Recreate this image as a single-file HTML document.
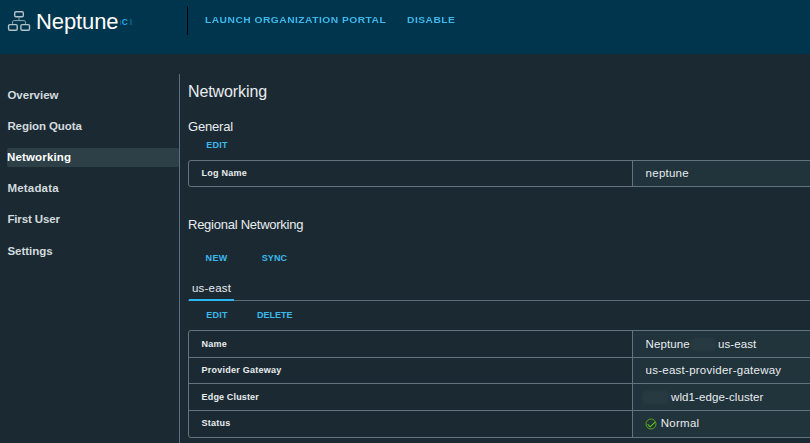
<!DOCTYPE html>
<html><head><meta charset="utf-8">
<style>
*{box-sizing:border-box;margin:0;padding:0}
html,body{width:810px;height:443px;overflow:hidden;background:#1b2a32;font-family:"Liberation Sans",sans-serif;color:#e9ecef}
.abs{position:absolute;white-space:nowrap}
#hdr{position:absolute;left:0;top:0;width:810px;height:54px;background:#00364d}
#title{left:36px;top:8px;font-size:22px;line-height:28px;color:#fff;letter-spacing:-0.1px}
#vsep{position:absolute;left:187px;top:6px;width:1px;height:29px;background:#000}
.hbtn{font-size:9.3px;font-weight:bold;color:#3cb8ee;letter-spacing:0.45px;top:14px;line-height:12px;transform:scaleX(1.1);transform-origin:0 0}
.nav{left:7px;font-size:11.5px;font-weight:bold;color:#d3dade;line-height:14px}
#navsel{position:absolute;left:7px;top:148px;width:172px;height:19px;background:#2d4048;border-radius:2px}
#vline{position:absolute;left:179px;top:74px;width:1px;height:369px;background:#5c7079}
h1,h2{font-weight:normal}
.h1{left:188px;font-size:16px;color:#e9ecef;letter-spacing:-0.1px}
.h2{left:188px;font-size:13px;color:#e9ecef;letter-spacing:-0.2px}
.btn{font-size:9px;font-weight:bold;color:#3cb8ee;letter-spacing:0.4px;line-height:12px}
.tbl{position:absolute;left:188px;width:640px;border:1px solid #62757e;border-radius:3px;}
.row{position:relative;height:26.67px;border-top:1px solid #62757e}
.row:first-child{border-top:none;height:25.67px}
.t1 .row:first-child{height:25px}
.lab{position:absolute;left:12.6px;top:0;line-height:25px;font-size:9px;font-weight:bold;color:#e9ecef;letter-spacing:0.25px}
.d1 .lab,.d1 .val{line-height:27px}
.val{position:absolute;left:443px;top:0;right:0;bottom:0;background:#21333b;border-left:1px solid #62757e;padding-left:12.6px;line-height:25px;font-size:11.5px;color:#e9ecef;letter-spacing:0.25px}
.sm{position:absolute;background:rgba(255,255,255,.035);filter:blur(1.5px);border-radius:4px}
</style></head><body>
<div id="hdr"></div>
<svg class="abs" style="left:0;top:0" width="40" height="40" viewBox="0 0 40 40" fill="none" stroke="#b3c1c9" stroke-width="1.4">
<rect x="14.7" y="11.7" width="8.6" height="5" rx="1.2"/><rect x="8.6" y="24.6" width="8.6" height="5.7" rx="1.2"/><rect x="20.9" y="24.6" width="8.6" height="5.7" rx="1.2"/><path stroke-width="1" stroke="#8fa3ad" d="M19 17.4v3.2M12.6 24v-2.2q0-1.2 1.2-1.2h10.4q1.2 0 1.2 1.2V24"/></svg>
<div class="abs" id="title">Neptune</div>
<div class="abs" style="left:119.6px;top:19.6px;width:1px;height:5px;background:#1d8fc4;opacity:.45"></div><div class="abs" style="left:121.8px;top:18.2px;font-size:8.4px;line-height:9px;font-weight:bold;color:#22a4e6;">C<span style="opacity:.3;margin-left:1.1px;display:inline-block;transform:scaleX(1.6);transform-origin:0 0">I</span></div>
<div id="vsep"></div>
<div class="abs hbtn" style="left:205px">LAUNCH ORGANIZATION PORTAL</div>
<div class="abs hbtn" style="left:407px">DISABLE</div>

<div id="navsel"></div>
<div class="abs nav" style="top:88px;left:7.4px">Overview</div>
<div class="abs nav" style="top:119px;left:7.4px;letter-spacing:-0.08px">Region Quota</div>
<div class="abs nav" style="top:150px;color:#fff;letter-spacing:0.15px">Networking</div>
<div class="abs nav" style="top:181px;left:7.4px;letter-spacing:0.2px">Metadata</div>
<div class="abs nav" style="top:212px;left:7.4px;letter-spacing:-0.12px">First User</div>
<div class="abs nav" style="top:244px;left:7.4px">Settings</div>
<div id="vline"></div>

<div class="abs h1" style="top:83px">Networking</div>
<div class="abs h2" style="top:119px">General</div>
<div class="abs btn" style="left:206.3px;top:139px;letter-spacing:0.2px">EDIT</div>
<div class="tbl t1" style="top:160px"><div class="row"><div class="lab">Log Name</div><div class="val">neptune</div></div></div>

<div class="abs h2" style="top:217px;letter-spacing:-0.25px">Regional Networking</div>
<div class="abs btn" style="left:205.5px;top:252px">NEW</div>
<div class="abs btn" style="left:261.8px;top:252px;letter-spacing:0.05px">SYNC</div>
<div class="abs" style="left:192px;top:282px;font-size:11.5px;color:#e9ecef;letter-spacing:0.2px">us-east</div>
<div class="abs" style="left:188.5px;top:299px;width:45.5px;height:2px;background:#2cb6f2;z-index:2"></div>
<div class="abs" style="left:188px;top:300px;width:622px;height:1px;background:#5a6d77"></div>
<div class="abs btn" style="left:206.3px;top:309px;letter-spacing:0.2px">EDIT</div>
<div class="abs btn" style="left:257px;top:309px;letter-spacing:0px">DELETE</div>
<div class="tbl" style="top:330px">
<div class="row d1"><div class="lab">Name</div><div class="val"><span style="letter-spacing:0.1px">Neptune</span><span class="abs" style="left:85px;top:0;letter-spacing:0.1px">us-east</span><i class="sm" style="left:58px;top:7px;width:25px;height:13px"></i></div></div>
<div class="row"><div class="lab">Provider Gateway</div><div class="val">us-east-provider-gateway</div></div>
<div class="row d1"><div class="lab" style="letter-spacing:0.15px">Edge Cluster</div><div class="val"><span class="abs" style="left:38px;top:0;letter-spacing:0.1px">wld1-edge-cluster</span><i class="sm" style="left:9px;top:7px;width:27px;height:13px"></i></div></div>
<div class="row"><div class="lab">Status</div><div class="val"><svg class="abs" style="left:10.7px;top:6.05px" width="14" height="14" viewBox="0 0 14 14" fill="none" stroke="#55aa18" stroke-width="0.95"><circle cx="7" cy="7" r="5"/><path stroke="#66cc1a" stroke-width="1.1" d="M3.6 7.4l2.5 2.4 5-4.7"/></svg><span class="abs" style="left:27.8px;top:0">Normal</span></div></div>
</div>
</body></html>
